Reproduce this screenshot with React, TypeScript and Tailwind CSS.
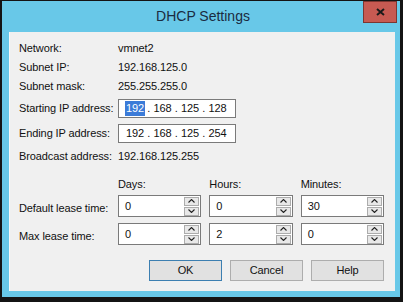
import React from 'react';

const FONT = '"Liberation Sans", Arial, sans-serif';

function IpBox({ octets, selectFirst }: { octets: string[]; selectFirst?: boolean }) {
  return (
    <div className="flex h-[19px] w-[118px] items-center border border-[#7a7a7a] bg-white pl-[6px]">
      {octets.map((o, i) => (
        <React.Fragment key={i}>
          {i > 0 && <span className="w-[7.5px] text-center">.</span>}
          <span className="flex w-[20px] justify-center">
            <span
              className={
                i === 0 && selectFirst
                  ? 'bg-[#3b7bd8] px-[1px] leading-[15px] text-white'
                  : 'px-[1px] leading-[15px]'
              }
            >
              {o}
            </span>
          </span>
        </React.Fragment>
      ))}
    </div>
  );
}

function Spinner({ value }: { value: string }) {
  return (
    <div className="flex h-[22px] items-center justify-between border border-[#7a7a7a] bg-white pl-[6px] pr-[1px]">
      <span className="leading-[15px]">{value}</span>
      <div className="flex flex-col gap-[1px]">
        <div className="flex h-[9px] w-[15px] items-center justify-center border border-[#acacac] bg-[#e8e8e8]">
          <svg width="7" height="4" viewBox="0 0 7 4">
            <path d="M0.5 3.5 L3.5 0.5 L6.5 3.5" fill="none" stroke="#222" strokeWidth="1.1" />
          </svg>
        </div>
        <div className="flex h-[9px] w-[15px] items-center justify-center border border-[#acacac] bg-[#e8e8e8]">
          <svg width="7" height="4" viewBox="0 0 7 4">
            <path d="M0.5 0.5 L3.5 3.5 L6.5 0.5" fill="none" stroke="#222" strokeWidth="1.1" />
          </svg>
        </div>
      </div>
    </div>
  );
}

export default function App() {
  const info = [
    ['Network:', 'vmnet2'],
    ['Subnet IP:', '192.168.125.0'],
    ['Subnet mask:', '255.255.255.0'],
  ];

  return (
    <div
      className="h-[302px] w-[403px] bg-[#141414] pb-[5px] pl-[2px] pr-[3px] pt-[1px] text-[11px] tracking-[-0.1px] text-[#111]"
      style={{ fontFamily: FONT }}
    >
      <div className="relative flex h-full flex-col bg-[#68c8e8] pb-[6px] pl-[7px] pr-[5px]">
        {/* title bar */}
        <div className="flex h-[31px] items-center justify-center pb-[1px] pl-[2px]">
          <span className="text-[14px] tracking-normal text-[#1b2b40]">DHCP Settings</span>
        </div>
        <div className="absolute right-[3px] top-0 flex h-[22px] w-[34px] items-center justify-center border border-[#7d3530] bg-[#c75a52]">
          <svg width="9" height="8" viewBox="0 0 9 8">
            <path d="M1 1 L8 7 M8 1 L1 7" stroke="#1a1a1a" strokeWidth="2" />
          </svg>
        </div>

        {/* body */}
        <div className="flex flex-1 flex-col border-l border-[#fafafa] bg-[#f0f0f0] pb-[10px] pl-[9px] pr-[11px] pt-[9px]">
          {info.map(([k, v], i) => (
            <div key={k} className={`flex h-[15px] items-center ${i > 0 ? 'mt-[4px]' : ''}`}>
              <span className="w-[99px] whitespace-nowrap">{k}</span>
              <span>{v}</span>
            </div>
          ))}

          <div className="mt-[5px] flex items-center">
            <span className="w-[99px] whitespace-nowrap">Starting IP address:</span>
            <IpBox octets={['192', '168', '125', '128']} selectFirst />
          </div>
          <div className="mt-[6px] flex items-center">
            <span className="w-[99px] whitespace-nowrap">Ending IP address:</span>
            <IpBox octets={['192', '168', '125', '254']} />
          </div>
          <div className="mt-[6px] flex h-[15px] items-center">
            <span className="w-[99px] whitespace-nowrap">Broadcast address:</span>
            <span>192.168.125.255</span>
          </div>

          {/* lease times */}
          <div className="mt-[13px] grid grid-cols-[91px_1fr_1fr_1fr] gap-x-[8px]">
            <span />
            <span className="h-[15px] leading-[15px]">Days:</span>
            <span className="h-[15px] leading-[15px]">Hours:</span>
            <span className="h-[15px] leading-[15px]">Minutes:</span>

            <span className="mt-[3px] flex h-[22px] items-center whitespace-nowrap pt-[4px]">Default lease time:</span>
            <div className="mt-[3px]">
              <Spinner value="0" />
            </div>
            <div className="mt-[3px]">
              <Spinner value="0" />
            </div>
            <div className="mt-[3px]">
              <Spinner value="30" />
            </div>

            <span className="mt-[6px] flex h-[22px] items-center whitespace-nowrap pt-[4px]">Max lease time:</span>
            <div className="mt-[6px]">
              <Spinner value="0" />
            </div>
            <div className="mt-[6px]">
              <Spinner value="2" />
            </div>
            <div className="mt-[6px]">
              <Spinner value="0" />
            </div>
          </div>

          {/* buttons */}
          <div className="mt-auto flex justify-end gap-[8px]">
            <button className="h-[21px] w-[73px] border border-[#3c7fb1] bg-[#e1e1e1]">OK</button>
            <button className="h-[21px] w-[73px] border border-[#adadad] bg-[#e1e1e1]">Cancel</button>
            <button className="h-[21px] w-[73px] border border-[#adadad] bg-[#e1e1e1]">Help</button>
          </div>
        </div>
      </div>
    </div>
  );
}
